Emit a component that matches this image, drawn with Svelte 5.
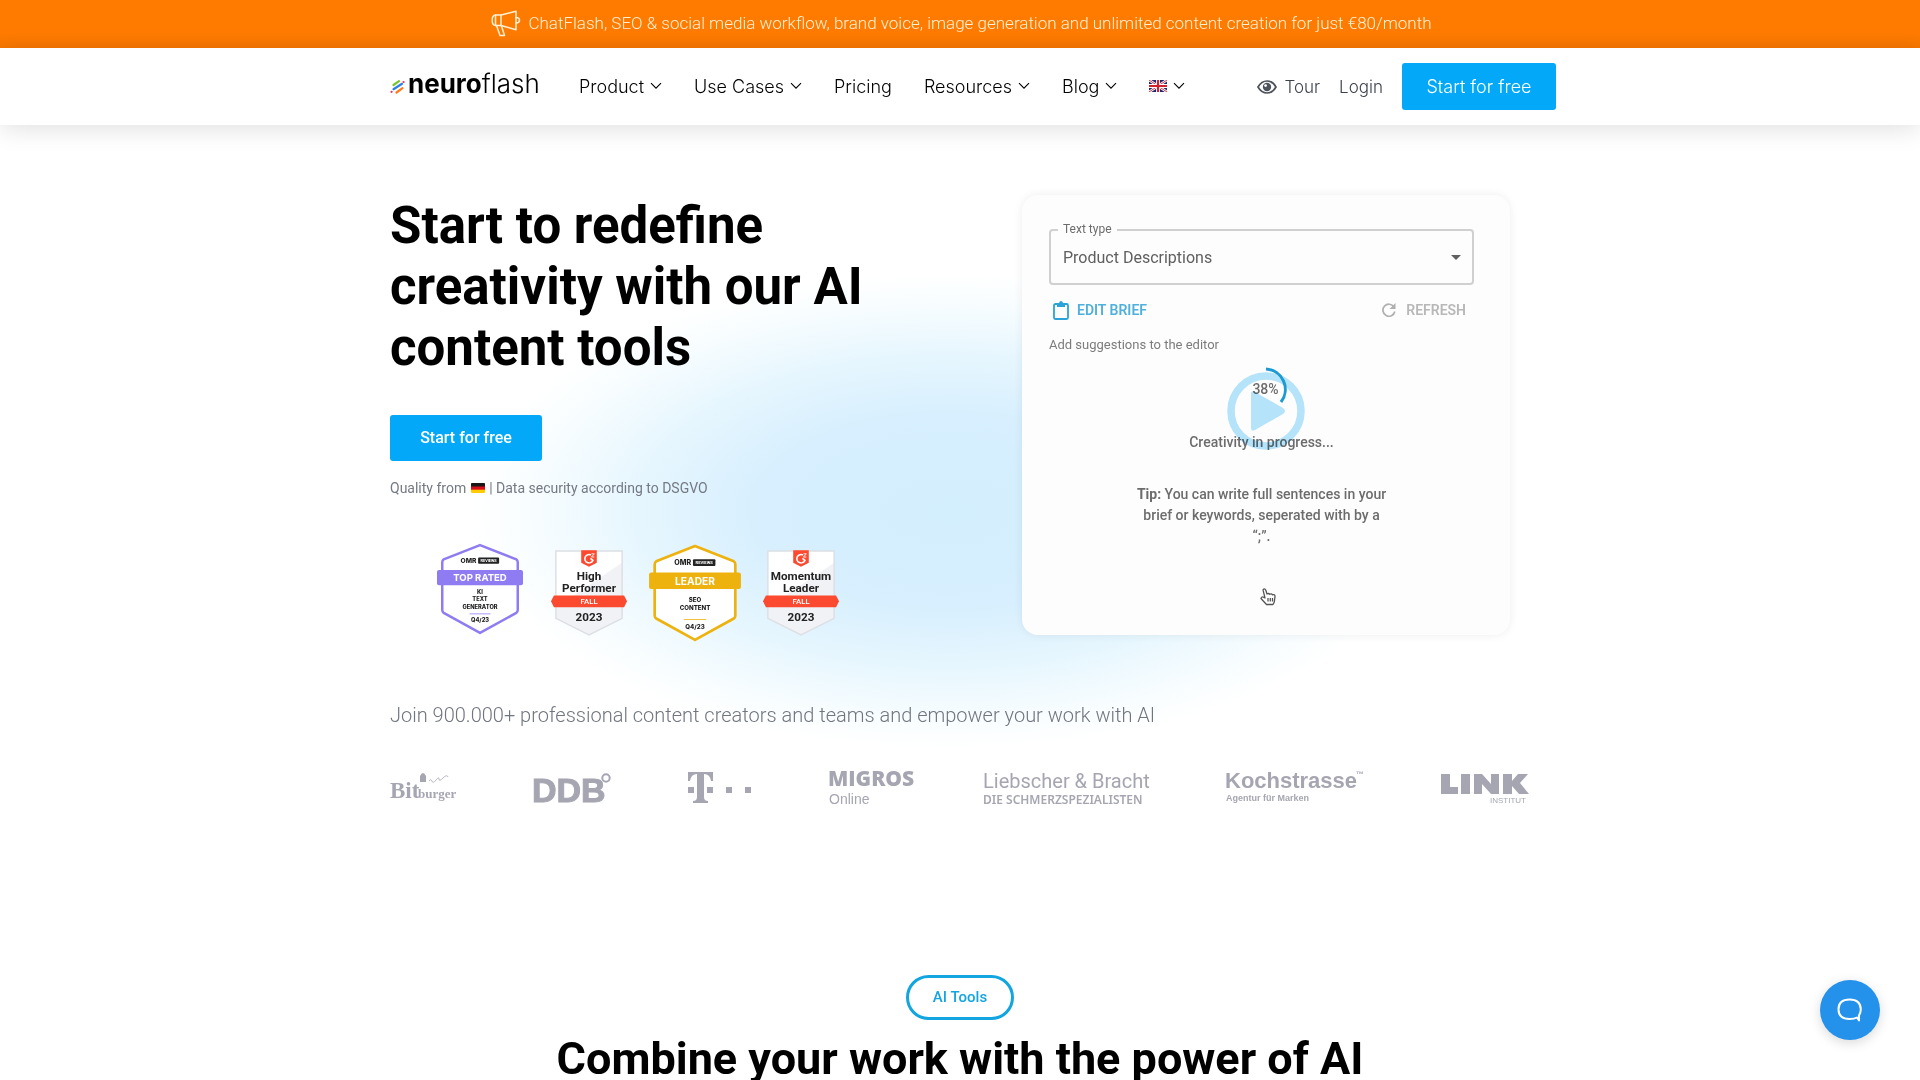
<script>
  const menu = [
    { label: 'Product', drop: true },
    { label: 'Use Cases', drop: true },
    { label: 'Pricing', drop: false },
    { label: 'Resources', drop: true },
    { label: 'Blog', drop: true }
  ];
</script>

{#snippet chevron()}
  <svg class="chevron" width="12" height="8" viewBox="0 0 12 8" aria-hidden="true">
    <path d="M1 1.2l5 5 5-5" fill="none" stroke="currentColor" stroke-width="1.1" />
  </svg>
{/snippet}

{#snippet omr(color, title, lines, footer)}
  <svg class="badge" width="92" height="98" viewBox="0 0 90 96" role="img" aria-label={title}>
    <path d="M45 2L83 17Q84.500 18 84.500 20V70Q84.500 72 83 73L45 94 7 73Q5.500 72 5.500 70V20Q5.500 18 7 17Z" fill="#fff" stroke={color} stroke-width="2.600" stroke-linejoin="round" />
    <text x="33" y="21" class="omr-name">OMR</text>
    <rect x="43" y="15" width="22" height="6.500" rx="1" fill="#222" />
    <text x="54" y="20" class="omr-reviews">REVIEWS</text>
    <rect x="0" y="28" width="90" height="16" rx="2" fill={color} />
    <text x="45" y="39.800" class="omr-title">{title}</text>
    {#each lines as line, i}
      <text x="45" y={(lines.length === 3 ? 53 : 57) + i * 7.800} class="omr-line">{line}</text>
    {/each}
    <path d="M34 74h22" stroke={color} stroke-width="0.800" />
    <text x="45" y="83" class="omr-line">{footer}</text>
  </svg>
{/snippet}

{#snippet g2(lines)}
  <svg class="badge" width="76" height="88" viewBox="0 0 78 90" role="img" aria-label={lines.join(' ')}>
    <path d="M5 2H73V71L39 88 5 71Z" fill="#fff" />
    <path d="M73 14V71L39 88 5 71V60Z" fill="#f1f2f5" />
    <path d="M5 2H73V71L39 88 5 71Z" fill="none" stroke="#dcdfe4" stroke-width="1.500" />
    <path d="M31 1H47V14L39 18 31 14Z" fill="#fb4a30" />
    <path d="M41 6A4.300 4.300 0 1 0 43 11.500L40.500 9.500" fill="none" stroke="#fff" stroke-width="1.600" />
    <path d="M41.500 4.800h3l-3 3.300h3" fill="none" stroke="#fff" stroke-width="0.900" />
    {#each lines as line, i}
      <text x="39" y={32 + i * 12} class="g2-line">{line}</text>
    {/each}
    <path d="M3 47.500H75L78 53.500 75 59.500H3L0 53.500Z" fill="#fb4a30" />
    <text x="39" y="56.500" class="g2-season">FALL</text>
    <text x="39" y="74" class="g2-year">2023</text>
  </svg>
{/snippet}

<div class="banner">
  <svg width="30" height="27" viewBox="0 0 30 27" fill="none" stroke="#fff1d6" stroke-width="1.500" stroke-linejoin="round" stroke-linecap="round" aria-hidden="true">
    <path d="M10 5L25 1.200V19.800L10 15.500H4.500Q1.200 15.500 1.200 10.300 1.200 5 4.500 5Z" />
    <path d="M10 5V15.500M4.500 5V15.500M25 7.500Q28.500 7.500 28.500 10.300 28.500 13 25 13" />
    <path d="M5.500 15.500L9 25.500H13.500L10.500 16" />
  </svg>
  <span>ChatFlash, SEO &amp; social media workflow, brand voice, image generation and unlimited content creation for just €80/month</span>
</div>

<header>
  <div class="bar">
    <a class="logo" href="#home" aria-label="neuroflash">
      <svg width="16" height="16" viewBox="0 0 16 16" fill="none" stroke-width="2.200" stroke-linecap="round" aria-hidden="true">
        <path d="M3.500 6L9 2.200" stroke="#79c52d" />
        <path d="M3.500 10.200L12 4.800" stroke="#2b7fe8" />
        <path d="M6.500 13.500L12.500 9.200" stroke="#ff7a1c" />
        <path d="M13.500 3h.1M1.500 12.800h.1" stroke="#e0336f" />
      </svg>
      <span><b>neuro</b>flash</span>
    </a>
    <nav>
      {#each menu as item}
        <a href="#menu">{item.label}{#if item.drop}{@render chevron()}{/if}</a>
      {/each}
      <a href="#language" aria-label="English">
        <svg width="18" height="12" viewBox="0 0 18 12" aria-hidden="true">
          <rect width="18" height="12" fill="#1d2a6d" />
          <path d="M0 0L18 12M18 0L0 12" stroke="#fff" stroke-width="2.500" />
          <path d="M0 0L18 12M18 0L0 12" stroke="#d3202f" stroke-width="0.900" />
          <path d="M9 0V12M0 6H18" stroke="#fff" stroke-width="4" />
          <path d="M9 0V12M0 6H18" stroke="#d3202f" stroke-width="2.200" />
        </svg>
        {@render chevron()}
      </a>
    </nav>
    <div class="account">
      <a href="#tour">
        <svg width="20" height="14" viewBox="0 0 20 14" aria-hidden="true">
          <path d="M1 7Q4.500 1 10 1T19 7Q15.500 13 10 13T1 7Z" fill="none" stroke="#4d525c" stroke-width="1.700" />
          <circle cx="10" cy="7" r="4.200" fill="#4d525c" />
          <circle cx="8.600" cy="5.600" r="1.400" fill="#fff" />
        </svg>Tour</a>
      <a href="#login">Login</a>
      <a class="cta" href="#start">Start for free</a>
    </div>
  </div>
</header>

<main>
  <section class="hero">
    <div class="wrap">
      <div class="columns">
        <div class="intro">
          <h1>Start to redefine creativity with our AI content tools</h1>
          <a class="start" href="#start">Start for free</a>
          <p class="quality">
            Quality from
            <svg width="14" height="10" viewBox="0 0 14 10" role="img" aria-label="Germany">
              <rect width="14" height="10" rx="1" fill="#fc0" />
              <path d="M0 6.700V3H14V6.700Z" fill="#d80f1a" />
              <path d="M0 3.400V1Q0 0 1 0H13Q14 0 14 1V3.400Z" fill="#171717" />
            </svg>
            | Data security according to DSGVO
          </p>
          <div class="badges">
            <div class="small">{@render omr('#8f7cf2', 'TOP RATED', ['KI', 'TEXT', 'GENERATOR'], 'Q4/23')}</div>
            {@render g2(['High', 'Performer'])}
            {@render omr('#edb20e', 'LEADER', ['SEO', 'CONTENT'], 'Q4/23')}
            {@render g2(['Momentum', 'Leader'])}
          </div>
        </div>

        <div class="card">
          <div class="field">
            <label for="text-type">Text type</label>
            <select id="text-type"><option>Product Descriptions</option></select>
            <svg width="10" height="5" viewBox="0 0 10 5" aria-hidden="true"><path d="M0 0H10L5 5Z" fill="#606060" /></svg>
          </div>
          <div class="actions">
            <button class="edit" type="button">
              <svg width="16" height="19" viewBox="0 0 16 19" aria-hidden="true">
                <rect x="1" y="3" width="14" height="15" rx="1.500" fill="none" stroke="#2ba3d8" stroke-width="1.800" />
                <path d="M4 2H6Q6.500 0 8 0T10 2H12V6H4Z" fill="#2ba3d8" />
              </svg>EDIT BRIEF</button>
            <button class="refresh" type="button">
              <svg width="14" height="14" viewBox="0 0 14 14" aria-hidden="true">
                <path d="M12 4A6 6 0 1 0 12.800 8.500" fill="none" stroke="#b0b0b0" stroke-width="1.700" />
                <path d="M13.500 0V6H7.500Z" fill="#b0b0b0" />
              </svg>REFRESH</button>
          </div>
          <p class="hint">Add suggestions to the editor</p>
          <div class="progress">
            <p class="percent">38%</p>
            <p>Creativity in progress...</p>
            <button class="play" type="button" aria-label="Play video">
              <svg width="78" height="90" viewBox="0 0 78 90" aria-hidden="true">
                <circle cx="39" cy="48" r="35" fill="none" stroke="#b7e5fb" stroke-width="7.500" />
                <path d="M24 31Q24 27 28 29L56 45Q60 48 56 51L28 67Q24 69 24 65Z" fill="#b7e5fb" />
                <path d="M39 6A20.500 20.500 0 0 1 54 39" fill="none" stroke="#1c9bd4" stroke-width="3" />
              </svg>
            </button>
          </div>
          <p class="tip"><b>Tip:</b> You can write full sentences in your brief or keywords, seperated with by a “;”.</p>
          <svg class="hand" width="16" height="18" viewBox="0 0 16 18" fill="#fff" stroke="#555" stroke-width="1.300" stroke-linejoin="round" aria-hidden="true">
            <path d="M5 10L3 1.800Q4.500 0 5.700 2L7 6Q8.500 4.800 9.800 6.300 11.500 5.300 12.500 6.800 15 6 15 8.500L14.300 14 13 16.500H6.500L1 10.500Q1.500 8 4 9.500Z" />
            <path d="M8 10v3.500M10.300 10v3.500M12.500 10v3.500" />
          </svg>
        </div>
      </div>

      <p class="join">Join 900.000+ professional content creators and teams and empower your work with AI</p>

      <div class="brands">
        <svg width="65" height="36" viewBox="0 0 65 36" role="img" aria-label="Bitburger">
          <text x="0" y="28" class="bit-big">Bit</text>
          <text x="28" y="28" class="bit-small">burger</text>
          <path d="M30 6Q33 0 36 6V12H30Z" />
          <path d="M39 11q2-3 3 0t4-1 3-1 4-1 5-1" class="thin" />
        </svg>
        <svg width="77" height="36" viewBox="0 0 77 36" role="img" aria-label="DDB">
          <text x="-1" y="32" class="ddb">DDB</text>
          <circle cx="73" cy="8" r="3.700" class="ring" />
        </svg>
        <svg width="64" height="36" viewBox="0 0 64 36" role="img" aria-label="Telekom">
          <path d="M0 2H25V11H23Q22 4 16 4V27Q16 31 20 31V33H5V31Q9 31 9 27V4Q3 4 2 11H0Z" />
          <path d="M0 17H6V23H0ZM19 17H25V23H19ZM38 17H44V23H38ZM57 17H63V23H57Z" />
        </svg>
        <svg width="86" height="36" viewBox="0 0 86 36" role="img" aria-label="Migros Online">
          <text x="-1" y="16" class="migros">MIGROS</text>
          <text x="0" y="34" class="online">Online</text>
        </svg>
        <svg class="wide" width="165" height="36" viewBox="0 0 165 36" role="img" aria-label="Liebscher &amp; Bracht">
          <text x="0" y="18" class="liebscher">Liebscher &amp; Bracht</text>
          <text x="0" y="34" class="schmerz">DIE SCHMERZSPEZIALISTEN</text>
        </svg>
        <svg width="137" height="36" viewBox="0 0 137 36" role="img" aria-label="Kochstrasse">
          <text x="-1" y="18" class="koch">Kochstrasse</text>
          <text x="130" y="7" class="tm">™</text>
          <text x="0" y="31" class="agentur">Agentur für Marken</text>
        </svg>
        <svg width="88" height="36" viewBox="0 0 88 36" role="img" aria-label="Link Institut">
          <path d="M0 4H9V17H17V24H0ZM20 4H29V24H20ZM33 4H41L50 14V4H58V24H50L41 14V24H33ZM62 4H71V11L77 4H87L79 13 88 24H78L71 16V24H62Z" />
          <text x="49" y="33" class="institut">INSTITUT</text>
        </svg>
      </div>
    </div>
  </section>

  <section class="tools">
    <a class="pill" href="#tools">AI Tools</a>
    <h2>Combine your work with the power of AI</h2>
  </section>
</main>

<button class="chat" type="button" aria-label="Open chat">
  <svg width="26" height="24" viewBox="0 0 26 24" aria-hidden="true">
    <path d="M20 19.500Q17.500 21 12.500 21 1.500 21 1.500 11.300T12.500 1.500 23.800 11.300Q23.800 14.500 22 17.500V22.500Z" fill="none" stroke="#fff" stroke-width="2" stroke-linejoin="round" />
  </svg>
</button>

<style>
  :global(body) {
    margin: 0;
    background: #fff;
    font-family: Roboto, "Liberation Sans", sans-serif;
    color: #000;
  }
  a { color: inherit; text-decoration: none; }
  button { font: inherit; color: inherit; border: 0; background: none; padding: 0; cursor: pointer; }
  p, h1, h2 { margin: 0; }
  svg { flex: none; }

  .banner {
    display: flex;
    align-items: center;
    justify-content: center;
    gap: 7px;
    box-sizing: border-box;
    height: 48px;
    padding: 0 0 2px 3px;
    background: linear-gradient(#ff7b00 70%, #f67600);
    color: #fff1d6;
    font-size: 17px;
    font-weight: 300;
  }

  header {
    position: relative;
    background: #fff;
    box-shadow: 0 4px 24px rgba(0, 0, 0, 0.12);
    font-family: Inter, "Open Sans", sans-serif;
    font-weight: 300;
    font-size: 17px;
  }
  .bar {
    display: flex;
    align-items: center;
    max-width: 1166px;
    height: 77px;
    margin: 0 auto;
    padding-left: 26px;
  }
  .logo { display: flex; align-items: center; gap: 2px; width: 189px; font-size: 26px; padding-bottom: 6px; }
  .logo svg { padding-top: 6px; }
  .logo b { font-weight: 700; }
  nav { display: flex; align-items: center; gap: 32px; padding-bottom: 1px; font-size: 18px; }
  nav a { display: flex; align-items: center; gap: 6px; }
  .account { display: flex; align-items: center; gap: 19px; margin-left: auto; color: #3c414b; }
  .account a { display: flex; align-items: center; gap: 7px; }
  .account .cta {
    justify-content: center;
    box-sizing: border-box;
    width: 154px;
    height: 47px;
    padding-bottom: 1px;
    border-radius: 3px;
    background: #03a9f8;
    color: #fff;
    font-size: 18px;
  }

  .hero {
    background: radial-gradient(ellipse 480px 238px at calc(50% - 10px) 386px, #d3eefd 0%, #d7effe 40%, #e6f6fe 65%, #f8fdff 88%, #fff 100%);
  }
  .wrap { max-width: 1140px; margin: 0 auto; padding-top: 70px; }
  .columns { display: flex; align-items: flex-start; justify-content: space-between; padding-right: 20px; }
  .intro { width: 500px; }
  h1 { font-size: 51px; line-height: 61px; font-weight: 700; }
  .start {
    display: flex;
    align-items: center;
    justify-content: center;
    box-sizing: border-box;
    width: 152px;
    height: 46px;
    margin-top: 37px;
    padding-bottom: 2px;
    border-radius: 3px;
    background: #03a9f8;
    color: #fff;
    font-size: 16px;
    font-weight: 500;
  }
  .quality { margin-top: 17px; font-size: 14px; line-height: 20px; color: #747983; }
  .quality svg { margin: 0 1px; }
  .badges { display: flex; align-items: center; gap: 22px; height: 100px; margin-top: 45px; padding-left: 47px; }
  .badge { display: block; }
  .small { padding: 0 6px 8px 0; }
  .small .badge { width: 86px; height: 94px; }
  .badge text { text-anchor: middle; font-weight: 700; fill: #222; }
  .badge .omr-name { font-size: 7px; font-family: Inter, sans-serif; font-weight: 800; }
  .badge .omr-reviews { font-size: 4px; fill: #fff; }
  .badge .omr-title { font-size: 10px; font-family: Inter, sans-serif; fill: #fff; }
  .badge .omr-line { font-size: 6px; font-family: Inter, sans-serif; font-weight: 800; }
  .badge .g2-line { font-size: 12px; }
  .badge .g2-season { font-size: 8px; font-weight: 500; fill: #fff; }
  .badge .g2-year { font-size: 12px; }

  .card {
    display: flex;
    flex-direction: column;
    align-items: stretch;
    box-sizing: border-box;
    width: 488px;
    min-height: 440px;
    padding: 34px 36px 28px 27px;
    border-radius: 16px;
    background: #fdfdfd;
    box-shadow: 0 0 10px rgba(0, 0, 0, 0.07);
    color: #6c6c6c;
  }
  .field { position: relative; }
  .field label {
    position: absolute;
    top: -8px;
    left: 9px;
    padding: 0 5px;
    background: #fdfdfd;
    font-size: 12px;
    line-height: 16px;
  }
  select {
    display: block;
    width: 100%;
    height: 56px;
    padding: 0 12px;
    border: 2px solid #d0d0d0;
    border-radius: 4px;
    appearance: none;
    background: none;
    font: inherit;
    font-size: 16px;
    color: #606060;
  }
  .field svg { position: absolute; right: 13px; top: 26px; }
  .actions { display: flex; justify-content: space-between; padding: 15px 8px 0 4px; font-size: 14px; font-weight: 600; }
  .actions button { display: flex; align-items: center; height: 20px; }
  .edit { gap: 8px; color: #4fb0dc; }
  .refresh { gap: 10px; color: #b8b8b8; }
  .hint { margin-top: 17px; font-size: 13px; line-height: 16px; color: #7c7c7c; }
  .progress { position: relative; margin-top: 26px; text-align: center; font-size: 14px; font-weight: 500; line-height: 20px; }
  .progress p + p { margin-top: 33px; }
  .percent { padding-left: 8px; }
  .play { position: absolute; left: 50%; top: -16px; margin-left: -35px; mix-blend-mode: multiply; }
  .play svg { display: block; }
  .tip { width: 252px; margin: 32px auto 0; text-align: center; font-size: 14px; font-weight: 500; line-height: 21px; }
  .hand { align-self: center; margin: 41px 0 0 12px; }

  .join { margin-top: 59px; font-size: 20px; font-weight: 300; line-height: 26px; color: #70757f; }
  .brands { display: flex; justify-content: space-between; margin-top: 42px; padding-right: 1px; }
  .brands svg { fill: #a5a6b1; overflow: visible; }
  .brands .wide { margin-left: -10px; }
  .brands .thin { fill: none; stroke: #b9bac3; stroke-width: 1; }
  .brands .ring { fill: none; stroke: #a5a6b1; stroke-width: 2; }
  .bit-big { font: 700 23px "Liberation Serif", serif; }
  .bit-small { font: 700 13px "Liberation Serif", serif; }
  .ddb { font: 700 34px "Liberation Sans", sans-serif; stroke: #a5a6b1; stroke-width: 1; }
  .migros { font: 800 21px "Open Sans", sans-serif; }
  .online { font: 400 14px "Liberation Sans", sans-serif; }
  .liebscher { font: 400 20px Roboto, sans-serif; }
  .schmerz { font: 600 12px "Noto Sans", sans-serif; }
  .koch { font: 700 22px "Liberation Sans", sans-serif; }
  .tm { font: 700 8px "Liberation Sans", sans-serif; }
  .agentur { font: 700 9px "Liberation Sans", sans-serif; }
  .institut { font: 400 8px "Liberation Sans", sans-serif; }

  .tools { display: flex; flex-direction: column; align-items: center; padding-top: 169px; }
  .pill {
    display: flex;
    align-items: center;
    justify-content: center;
    box-sizing: border-box;
    width: 108px;
    height: 45px;
    padding-bottom: 1px;
    border: 3px solid #13a5df;
    border-radius: 23px;
    color: #13a5df;
    font-size: 15px;
    font-weight: 500;
  }
  h2 { margin-top: 11px; font-size: 45px; line-height: 56px; font-weight: 700; text-align: center; }

  .chat {
    position: fixed;
    right: 40px;
    bottom: 40px;
    display: flex;
    align-items: center;
    justify-content: center;
    width: 60px;
    height: 60px;
    border-radius: 50%;
    background: #2491eb;
    box-shadow: 0 3px 12px rgba(0, 0, 0, 0.15);
  }
</style>
